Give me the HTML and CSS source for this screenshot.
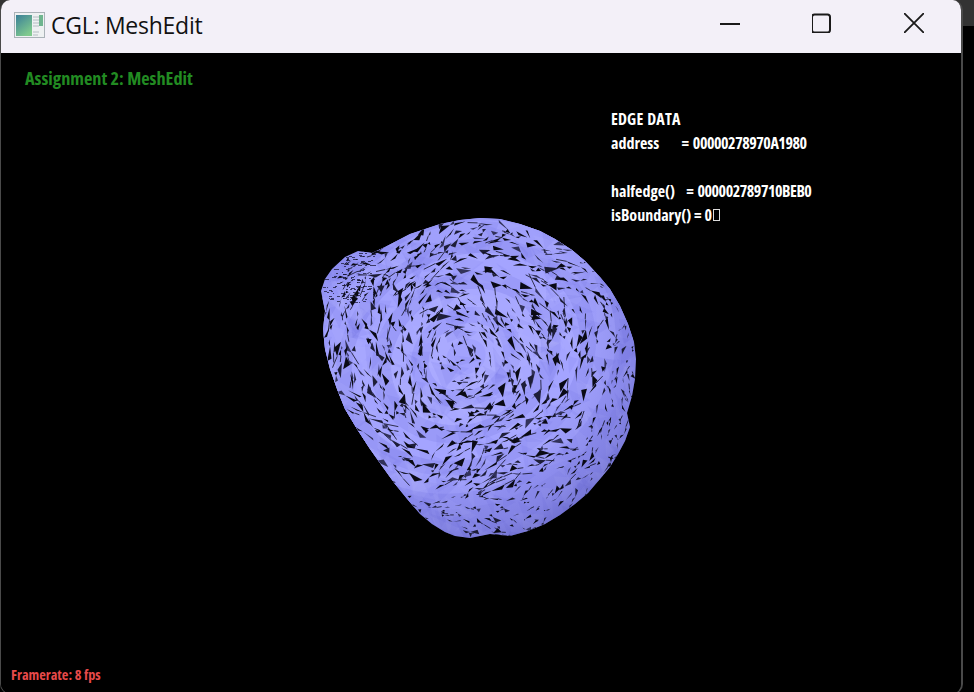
FILE: index.html
```html
<!DOCTYPE html>
<html lang="en">
<head>
<meta charset="utf-8">
<title>CGL: MeshEdit</title>
<link rel="stylesheet" href="styles.css">
</head>
<body>
<div class="desktop">
  <div class="window">
    <header class="titlebar">
      <div class="title-left">
        <svg class="app-icon" width="32" height="28" viewBox="0 0 32 28">
          <defs>
            <linearGradient id="appg" x1="0" y1="0" x2="0.6" y2="1">
              <stop offset="0" stop-color="#3a7f98"/>
              <stop offset="1" stop-color="#7fca8e"/>
            </linearGradient>
          </defs>
          <rect x="0.5" y="0.5" width="30" height="25" fill="#eef1f2" stroke="#aab2b8"/>
          <rect x="2" y="3" width="16" height="21" fill="url(#appg)"/>
          <path d="M19 5h6M19 8h6M19 11h6M19 14h6M19 20h6M19 23h5" stroke="#b4bcc2" stroke-width="1"/>
          <rect x="25" y="3" width="4" height="11" fill="#6fb58f"/>
        </svg>
        <span class="title-text">CGL: MeshEdit</span>
      </div>
      <div class="controls">
        <svg class="ctl" width="20" height="20" viewBox="0 0 20 20"><path d="M0 11H20" stroke="#1a1a1a" stroke-width="2" fill="none"/></svg>
        <svg class="ctl" width="20" height="20" viewBox="0 0 20 20"><rect x="0" y="1.5" width="18" height="18" rx="2.5" stroke="#1a1a1a" stroke-width="2" fill="none"/></svg>
        <svg class="ctl" width="20" height="20" viewBox="0 0 20 20"><path d="M0 0L20 20M20 0L0 20" stroke="#1a1a1a" stroke-width="1.8" fill="none"/></svg>
      </div>
    </header>
    <main class="viewport">
      <h1 class="assignment">Assignment 2: MeshEdit</h1>
      <pre class="edge-data"><span class="edge-head">EDGE DATA</span>
address      = <span class="hex">00000278970A1980</span>

halfedge()   = <span class="hex">000002789710BEB0</span>
<span class="plain">isBoundary() = 0</span><span class="tofu"></span></pre>
      <canvas class="mesh" id="mesh" width="340" height="340"></canvas>
      <div class="framerate">Framerate: 8 fps</div>
    </main>
  </div>
</div>
<script src="mesh.js"></script>
</body>
</html>
```
FILE: styles.css
```css
html, body { margin: 0; padding: 0; background: #000; }
.desktop {
  width: 974px; height: 692px; overflow: hidden; background: linear-gradient(#333 0, #333 26px, #000 26px);
}
.window {
  width: 963px; height: 694px; box-sizing: border-box;
  border: 1px solid #4a4a4a; border-top: 0; border-right-width: 2px; border-radius: 10px; overflow: hidden;
  display: flex; flex-direction: column; background: #000;
}
.titlebar {
  height: 53px; flex: none; background: #f3f0f8;
  display: flex; align-items: center; justify-content: space-between;
}
.title-left { display: flex; align-items: center; margin-left: 13px; }
.app-icon { display: block; margin-top: -2px; }
.title-text {
  font: 400 23px/1 "Open Sans", sans-serif; color: #111; margin-left: 5px; margin-top: -2px;
  letter-spacing: -0.26px;
}
.controls { display: flex; gap: 72px; margin-right: 37px; margin-top: -8px; }
.ctl { display: block; }
.viewport { position: relative; flex: 1; background: #000; font-family: "Open Sans", sans-serif; font-weight: 700; font-stretch: 75%; }
.assignment {
  margin: 0; position: absolute; left: 24px; top: 13px;
  font-size: 18.3px; line-height: 24px; font-weight: 700; color: #228b22;
}
.edge-data {
  margin: 0; position: absolute; left: 610px; top: 54px;
  font-family: inherit; font-size: 16px; line-height: 24px; color: #fff; white-space: pre; word-spacing: 0.85px;
}
.edge-head { letter-spacing: 0.15px; }
.hex { letter-spacing: -0.46px; }
.plain { word-spacing: 0; }
.tofu { display: inline-block; width: 5px; height: 10px; border: 1px solid #ddd; margin-left: 1px; }
.mesh { position: absolute; left: 310px; top: 157px; display: block; }
.framerate {
  position: absolute; left: 10px; top: 613px;
  font-size: 14.3px; line-height: 18px; color: #e84a4a;
}
```
FILE: mesh.js
```js
(function () {
  var canvas = document.getElementById('mesh');
  var ctx = canvas.getContext('2d');
  var OX = 311, OY = 211; // page coordinates of the canvas origin
  var outline = [[480,219],[500,220],[520,225],[540,232],[555,240],[572,251],[585,262],[600,278],[610,290],[620,307],[628,325],[634,343],[636,360],[635,380],[632,397],[627,414],[630,428],[625,442],[618,455],[610,468],[600,480],[588,494],[575,505],[560,516],[545,525],[528,532],[510,537],[490,535],[470,539],[455,537],[445,533],[432,525],[420,515],[408,501],[395,485],[382,467],[370,450],[357,430],[345,410],[337,390],[330,370],[325,350],[323,330],[325,312],[321,292],[325,280],[332,270],[345,258],[358,252],[372,254],[385,248],[410,235],[440,225],[460,221]];
  var seed = 20231;
  function rnd() { seed = (seed * 1664525 + 1013904223) >>> 0; return seed / 4294967296; }
  function P(x, y) { return [x - OX, y - OY]; }
  function trace() {
    ctx.beginPath();
    outline.forEach(function (p, i) {
      var q = P(p[0], p[1]);
      if (i) ctx.lineTo(q[0], q[1]); else ctx.moveTo(q[0], q[1]);
    });
    ctx.closePath();
  }
  function inside(x, y) {
    var c = false;
    for (var i = 0, j = outline.length - 1; i < outline.length; j = i++) {
      var a = outline[i], b = outline[j];
      if ((a[1] > y) !== (b[1] > y) && x < (b[0] - a[0]) * (y - a[1]) / (b[1] - a[1]) + a[0]) c = !c;
    }
    return c;
  }
  var cx = 462, cy = 352;
  ctx.save();
  trace();
  ctx.clip();
  ctx.fillStyle = '#9292f2';
  ctx.fillRect(0, 0, canvas.width, canvas.height);

  // Concentric shaded bands around the swirl
  var bands = [[170,'#9696f6'],[152,'#a0a0fc'],[132,'#9797f6'],[116,'#a4a4ff'],[96,'#9a9af8'],[76,'#a8a8ff'],[56,'#9e9efb'],[38,'#aaaaff'],[20,'#a2a2fd']];
  bands.forEach(function (b) {
    var p = P(cx + 4, cy + 6);
    ctx.fillStyle = b[1];
    ctx.beginPath();
    ctx.ellipse(p[0], p[1], b[0] * 1.02, b[0] * 0.86, -0.5, 0, Math.PI * 2);
    ctx.fill();
  });

  // Faceted tint patches
  for (var f = 0; f < 420; f++) {
    var fx = 320 + rnd() * 320, fy = 215 + rnd() * 325;
    var fp = P(fx, fy);
    ctx.fillStyle = rnd() > 0.5 ? 'rgba(190,190,255,0.12)' : 'rgba(100,100,220,0.10)';
    ctx.beginPath();
    ctx.moveTo(fp[0], fp[1]);
    ctx.lineTo(fp[0] + 8 + rnd() * 24, fp[1] + rnd() * 16);
    ctx.lineTo(fp[0] + rnd() * 16, fp[1] + 8 + rnd() * 24);
    ctx.fill();
  }

  // Rim shading, strongest at the lower right
  var rim = P(cx - 12, cy - 12);
  var g = ctx.createRadialGradient(rim[0], rim[1], 135, rim[0], rim[1], 235);
  g.addColorStop(0, 'rgba(60,60,160,0)');
  g.addColorStop(0.55, 'rgba(60,60,160,0.18)');
  g.addColorStop(1, 'rgba(50,50,130,0.5)');
  ctx.fillStyle = g;
  ctx.fillRect(0, 0, canvas.width, canvas.height);

  // Black shards following the flow around the swirl
  function flow(x, y) {
    var dx = x - cx, dy = (y - cy) * 1.15;
    var a = Math.atan2(dy, dx) + Math.PI / 2 - 0.08;
    a += 0.32 * Math.sin(x * 0.04 + y * 0.025) + 0.3 * Math.sin(y * 0.055 - x * 0.018);
    return a;
  }
  function tone() {
    var v = rnd();
    return v > 0.4 ? '#0a0a14' : (v > 0.12 ? '#1e1e38' : '#32325a');
  }
  function tri(ax, ay, bx, by, cx2, cy2) {
    ctx.fillStyle = tone();
    ctx.beginPath();
    ctx.moveTo(ax, ay);
    ctx.lineTo(bx, by);
    ctx.lineTo(cx2, cy2);
    ctx.closePath();
    ctx.fill();
  }
  function shard(x, y, scale) {
    var r = Math.hypot(x - cx, y - cy);
    var a = flow(x, y) + (rnd() - 0.5) * (r < 40 ? 0.35 : 1.0);
    var len = (5 + rnd() * 11) * scale;
    var wid = (1 + rnd() * rnd() * 6.5) * scale;
    var ux = Math.cos(a), uy = Math.sin(a), nx = -uy, ny = ux;
    var t = 0.1 + rnd() * 0.5;
    var side = rnd() > 0.5 ? 1 : -1;
    var p = P(x, y);
    var hx = p[0] + ux * len / 2, hy = p[1] + uy * len / 2;
    var tx = p[0] - ux * len / 2, ty = p[1] - uy * len / 2;
    tri(tx, ty,
      p[0] + ux * (t - 0.5) * len + nx * wid * side, p[1] + uy * (t - 0.5) * len + ny * wid * side,
      hx, hy);
    // Some shards carry a small second triangle hinged at the tip
    if (rnd() > 0.6) {
      var l2 = len * (0.4 + rnd() * 0.5), b = a + (rnd() - 0.5) * 1.3;
      var w2 = (0.8 + rnd() * 3) * scale * -side;
      var ex = hx + Math.cos(b) * l2, ey = hy + Math.sin(b) * l2;
      tri(hx, hy,
        hx + Math.cos(b) * l2 * 0.5 - Math.sin(b) * w2, hy + Math.sin(b) * l2 * 0.5 + Math.cos(b) * w2,
        ex, ey);
    }
    // Hairline running on from the tail
    if (rnd() > 0.72) {
      var l3 = len * (0.4 + rnd() * 0.6), c = a + (rnd() - 0.5) * 0.4;
      ctx.strokeStyle = '#10101f';
      ctx.lineWidth = 0.8;
      ctx.beginPath();
      ctx.moveTo(tx, ty);
      ctx.lineTo(tx - Math.cos(c) * l3, ty - Math.sin(c) * l3);
      ctx.stroke();
    }
  }
  // Jittered grid gives the even scatter of the mesh flips
  for (var gy = 216; gy < 542; gy += 9) {
    for (var gx = 318; gx < 640; gx += 9) {
      var x = gx + rnd() * 9, y = gy + rnd() * 9;
      if (!inside(x, y)) continue;
      var d = Math.hypot(x - cx, (y - cy) * 1.05);
      if (rnd() > 0.8) continue;
      if (x < 372 && y < 300) continue; // the bump gets fine stipple instead
      shard(x, y, d > 150 ? 0.62 : (d < 35 ? 0.75 : 1));
    }
  }
  // Fine stipple along the bump at upper left
  ctx.fillStyle = 'rgba(15,15,40,0.7)';
  for (var s = 0; s < 130; s++) {
    var sx = 322 + rnd() * 52, sy = 253 + rnd() * 52;
    if (!inside(sx, sy)) continue;
    var sp = P(sx, sy);
    ctx.fillRect(Math.round(sp[0]), Math.round(sp[1]), 1 + Math.round(rnd() * 3), 1);
  }
  for (var q = 0; q < 26; q++) {
    var qx = 338 + rnd() * 34, qy = 262 + rnd() * 42;
    if (inside(qx, qy)) shard(qx, qy, 0.65);
  }
  ctx.restore();
})();
```
